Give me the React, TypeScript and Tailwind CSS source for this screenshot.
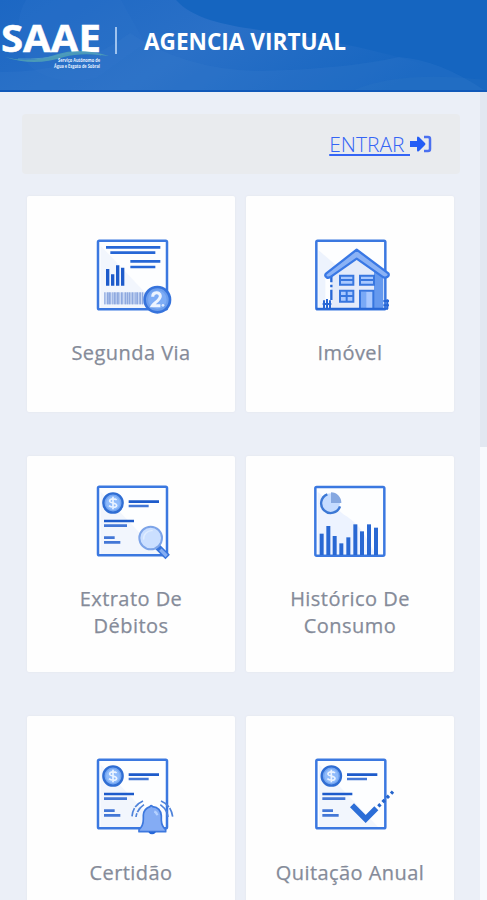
import React from 'react';

const BLUE = '#2767d6';
const DARK = '#1d5bcb';

function Frame({ x = 37, y = 31, tint = true }: { x?: number; y?: number; tint?: boolean }) {
  return (
    <g>
      <rect x={x} y={y} width="207" height="206" rx="4" fill="#fdfeff" />
      {tint && <path d={`M${x + 8} ${y + 15}L${x + 185} ${y + 202}H${x + 8}Z`} fill="#f2f6fd" />}
      <rect x={x} y={y} width="207" height="206" rx="4" fill="none" stroke="#3b78e0" strokeWidth="7.5" />
    </g>
  );
}

function Coin({ x, y }: { x: number; y: number }) {
  return (
    <g>
      <circle cx={x} cy={y} r="29" fill="#75a7f2" stroke="#2f6dd3" strokeWidth="7" />
      <circle cx={x} cy={y} r="21" fill="#8fbbfb" />
      <path
        d={`M${x + 11} ${y - 9}C${x + 5} ${y - 15} ${x - 11} ${y - 13} ${x - 10} ${y - 5}C${x - 9} ${y + 1} ${x + 11} ${y - 1} ${x + 11} ${y + 7}C${x + 10} ${y + 15} ${x - 6} ${y + 14} ${x - 12} ${y + 8}M${x} ${y - 19}V${y + 19}`}
        fill="none"
        stroke="#eaf3ff"
        strokeWidth="5"
      />
    </g>
  );
}

function Statement({ x = 0, y = 0 }: { x?: number; y?: number }) {
  return (
    <g transform={`translate(${x} ${y})`}>
      <Frame y={35} x={39} />
      <Coin x={84} y={84} />
      <g stroke="#4377d6" strokeWidth="8">
        <path d="M131 80H222M57 138H147" stroke={DARK} />
        <path d="M131 93H191M57 152H126M57 188H89M57 202H106" />
      </g>
    </g>
  );
}

function Icon({ label, children }: { label: string; children: React.ReactNode }) {
  return (
    <svg width="95" height="90" viewBox="0 0 285 270" role="img" aria-label={label} className="block shrink-0">
      {children}
    </svg>
  );
}

function InvoiceIcon() {
  const stripes = [58, 66, 72, 82, 87, 95, 100, 108, 119, 126, 131, 140, 149, 154, 163, 171];
  return (
    <Icon label="Segunda Via">
      <Frame y={32} x={39} />
      <path d="M63 52H226M76 68H211M136 94H226M136 111H211" stroke={BLUE} strokeWidth="8" />
      <path d="M68 167V117M83 167V133M98 167V106M113 167V113" stroke={DARK} strokeWidth="10" />
      <rect x="57" y="187" width="122" height="36" fill="#c9d8f4" />
      {stripes.map((s, i) => (
        <rect key={s} x={s} y="187" width={i % 3 === 0 ? 3 : 5} height="36" fill="#8ea9df" />
      ))}
      <circle cx="217" cy="209" r="38" fill="#6c9eed" stroke="#3673dc" strokeWidth="8" />
      <circle cx="217" cy="209" r="28" fill="#7dacf6" />
      <path d="M203 200C203 185 225 184 226 198C226 211 207 218 202 227H226" fill="none" stroke="#edf4ff" strokeWidth="9" />
      <circle cx="234" cy="226" r="4" fill="#dce9ff" />
    </Icon>
  );
}

function HouseIcon() {
  return (
    <Icon label="Imóvel">
      <Frame x={34} y={32} tint={false} />
      <path d="M40 60L100 112L61 130V232H40Z" fill="#edf3fd" />
      <path d="M79 132L155 80L227 132V236H79Z" fill="#e4ebfa" />
      <path d="M207 117L235 136V236H207Z" fill="#6599ee" />
      <path d="M79 137V157M79 164V172M79 179V210" stroke={BLUE} strokeWidth="7" />
      <path
        d="M155 59L250 130Q254 138 244 142Q239 145 232 140L155 86L78 140Q71 145 65 142Q57 136 64 130Z"
        fill="#8bb2f5"
        stroke="#3978e5"
        strokeWidth="7"
        strokeLinejoin="round"
      />
      <g fill="#a8c8ff" stroke="#3776df" strokeWidth="6">
        <path d="M105 137H145V164H105ZM105 150H145M165 137H207V164H165ZM165 150H207M105 182H145V215H105ZM125 182V215M105 198H145M165 236V182H205V236" />
      </g>
      <path d="M168 234V186H184V234" fill="#79a9f6" />
      <path
        d="M34 236H249M57 211V235M66 207V235M75 211V235M53 222H79M235 213H252M235 226H252M247 208V237"
        stroke={BLUE}
        strokeWidth="6"
      />
    </Icon>
  );
}

function SearchIcon() {
  return (
    <Icon label="Extrato De Débitos">
      <Statement />
      <path d="M218 216L248 246" stroke="#3774dc" strokeWidth="19" />
      <path d="M226 224L245 243" stroke="#86aef2" strokeWidth="10" />
      <circle cx="197" cy="189" r="34" fill="#cbdfff" stroke="#7da4e8" strokeWidth="6" />
      <path d="M176 194A24 24 0 0 1 203 167" fill="none" stroke="#e0edff" strokeWidth="4" />
    </Icon>
  );
}

function ChartIcon() {
  const bars = [[50, 176], [70, 153], [89, 183], [109, 205], [130, 187], [151, 148], [171, 169], [192, 148], [213, 158]];
  return (
    <Icon label="Histórico De Consumo">
      <Frame x={31} y={36} tint={false} />
      <path d="M38 50L115 118Q146 135 173 170L211 236H38Z" fill="#edf3ff" />
      <circle cx="76" cy="84" r="29" fill="#c5dcff" />
      <path d="M67 58A29 29 0 1 0 105 94" fill="none" stroke="#3c78d5" strokeWidth="7" />
      <path d="M78 52A31 31 0 0 1 109 84H78Z" fill="#86a8e0" />
      {bars.map(([x, y]) => (
        <path key={x} d={`M${x} 240V${y}`} stroke="#2968d3" strokeWidth="12" />
      ))}
    </Icon>
  );
}

function BellIcon() {
  return (
    <Icon label="Certidão">
      <Statement y={-6} />
      <path
        d="M162 239Q175 228 175 208V196Q176 176 195 170Q197 164 203 170Q227 173 229 197V211Q230 229 242 239V245H162Z"
        fill="#84acf4"
        stroke="#3d78de"
        strokeWidth="5"
        strokeLinejoin="round"
      />
      <path d="M192 246Q201 256 211 246" fill="#2868d8" stroke="#2868d8" strokeWidth="4" />
      <path d="M208 184Q215 187 217 196" stroke="#b5d1ff" strokeWidth="7" fill="none" />
      <path
        d="M174 153Q144 166 141 199M177 164Q156 178 153 201M228 153Q258 165 263 200M226 164Q246 178 249 201"
        fill="none"
        stroke="#4f83da"
        strokeWidth="5"
        strokeDasharray="30 4"
      />
    </Icon>
  );
}

function CheckIcon() {
  return (
    <Icon label="Quitação Anual">
      <Statement x={-5} y={-6} />
      <path d="M141 166L182 207L214 175" fill="none" stroke="#2c6ed7" strokeWidth="17" />
      <path d="M220 169L264 125" stroke="#2464cb" strokeWidth="10" strokeDasharray="9 9" />
    </Icon>
  );
}

const services = [
  { lines: ['Segunda Via'], icon: InvoiceIcon, top: 'pt-[34px]', left: 'pl-[58px]', gap: 'mt-[19px]' },
  { lines: ['Imóvel'], icon: HouseIcon, top: 'pt-[34px]', left: 'pl-[59px]', gap: 'mt-[19px]' },
  { lines: ['Extrato De', 'Débitos'], icon: SearchIcon, top: 'pt-[19px]', left: 'pl-[58px]', gap: 'mt-[20px]' },
  { lines: ['Histórico De', 'Consumo'], icon: ChartIcon, top: 'pt-[19px]', left: 'pl-[59px]', gap: 'mt-[20px]' },
  { lines: ['Certidão'], icon: BellIcon, top: 'pt-[34px]', left: 'pl-[58px]', gap: 'mt-[19px]' },
  { lines: ['Quitação Anual'], icon: CheckIcon, top: 'pt-[34px]', left: 'pl-[59px]', gap: 'mt-[19px]' },
];

function Header() {
  return (
    <header className="relative h-[92px] overflow-hidden border-b-2 border-[#1159b9] bg-[#1565c0]">
      <svg className="absolute inset-0" width="487" height="92" viewBox="0 0 487 92" aria-hidden="true">
        <defs>
          <linearGradient id="wave" x2="1" y2=".3">
            <stop stopColor="#1c67c3" />
            <stop offset=".5" stopColor="#2a70c7" />
            <stop offset="1" stopColor="#1565c0" />
          </linearGradient>
        </defs>
        <path d="M0 0H176C200 27 255 28 300 36S400 54 487 85V92H0Z" fill="url(#wave)" />
        <path d="M26 0Q10 25 28 64Q50 87 96 78L145 43L121 0Z" fill="#3478cb" opacity=".22" />
        <path d="M130 33Q185 70 260 71Q345 69 399 57Q440 60 487 92H0V72Q80 72 130 33Z" fill="#3c7dcc" opacity=".24" />
        <path d="M354 90Q400 70 487 80V92H354Z" fill="#4280c9" opacity=".12" />
      </svg>
      <div className="relative flex h-full items-start text-white">
        <div className="h-20 w-[110px] shrink-0">
          <svg width="110" height="80" viewBox="0 0 110 80" role="img" aria-label="SAAE" className="overflow-visible">
            <text x="1" y="52" textLength="100" lengthAdjust="spacingAndGlyphs" fill="white" fontFamily="Open Sans" fontSize="37" fontWeight="700" stroke="white" strokeWidth="0.5">SAAE</text>
            <path d="M5 57Q29 64 58 54Q80 47 109 56Q82 52 64 57Q34 67 5 57Z" fill="#54a5b3" opacity=".8" />
            <path d="M18 59Q43 60 65 54Q83 50 101 55" stroke="#4d9ac4" strokeWidth="1" fill="none" />
            <text x="58" y="62" textLength="42" lengthAdjust="spacingAndGlyphs" fill="#e3f0ff" fontFamily="Open Sans" fontSize="4.5" fontWeight="700">Serviço Autônomo de</text>
            <text x="54" y="67.5" textLength="46" lengthAdjust="spacingAndGlyphs" fill="#e3f0ff" fontFamily="Open Sans" fontSize="4.5" fontWeight="700">Água e Esgoto de Sobral</text>
          </svg>
        </div>
        <div className="mt-[27px] ml-[5px] h-[27px] w-[2px] bg-[#9fc3ee]" />
        <h1 className="mt-[27px] ml-[27px] text-[22.6px] leading-[30px] font-bold whitespace-nowrap">AGENCIA VIRTUAL</h1>
      </div>
    </header>
  );
}

export default function App() {
  return (
    <div className="h-[900px] w-[487px] overflow-hidden bg-[#ebeff7] font-['Open_Sans',sans-serif]">
      <Header />
      <div className="flex h-[808px]">
        <main className="w-[480px] shrink-0 pt-[22px]">
          <section className="ml-[22px] flex h-[60px] w-[438px] items-center justify-end rounded-[4px] bg-[#e9ebee] pr-[28px]">
            <a href="#" className="flex items-center text-[#3565f5]">
              <span className="text-[21px] leading-[27px] font-light whitespace-pre underline decoration-[1.5px] underline-offset-2">ENTRAR </span>
              <svg width="22" height="18" viewBox="0 0 22 18" aria-hidden="true">
                <path d="M0 6H7V3Q7 .5 9 2L15 8Q16 9 15 10L9 16Q7 17.5 7 15V12H0Z" fill="#245df5" />
                <path d="M14 2H18Q20 2 20 4V14Q20 16 18 16H14" fill="none" stroke="#4b70f0" strokeWidth="2.5" />
              </svg>
            </a>
          </section>
          <div className="mt-[22px] ml-[27px] grid w-[427px] grid-cols-[208px_208px] gap-x-[11px] gap-y-[44px]">
            {services.map(({ lines, icon: ServiceIcon, top, left, gap }) => (
              <article key={lines[0]} className={`h-[216px] rounded-[2px] bg-[#fefefe] shadow-[0_0_2px_#dfe3e9] ${top}`}>
                <div className={left}><ServiceIcon /></div>
                <h2 className={`text-center text-[20px] leading-[27px] font-normal tracking-[0.45px] text-[#858b99] [-webkit-text-stroke:0.25px_#858b99] ${gap}`}>
                  {lines.map((line) => <span key={line} className="block">{line}</span>)}
                </h2>
              </article>
            ))}
          </div>
        </main>
        <aside className="w-[7px] bg-[#f7f9fd]">
          <div className="h-[355px] bg-[#e2e7f1]" />
        </aside>
      </div>
    </div>
  );
}
